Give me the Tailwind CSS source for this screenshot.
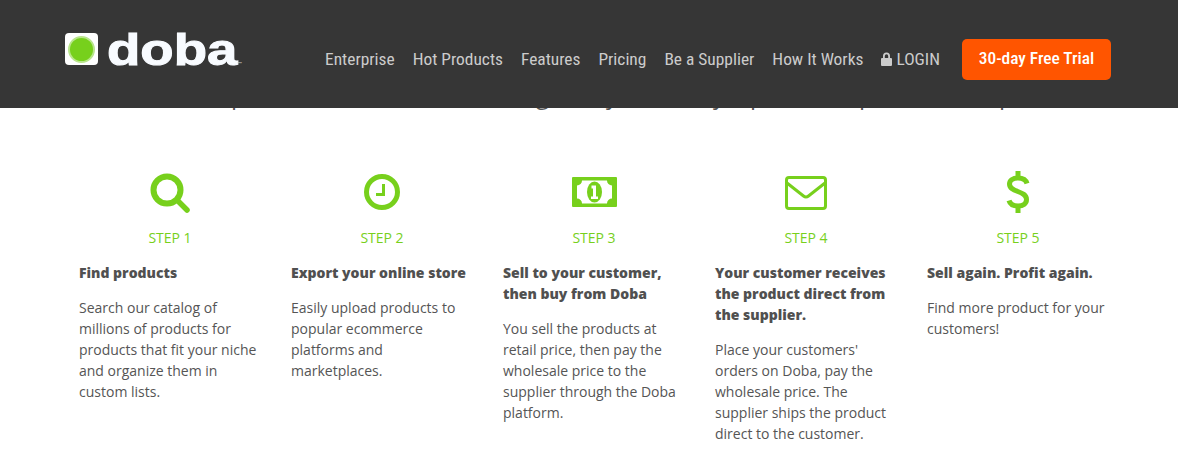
<!DOCTYPE html>
<html lang="en">
<head>
    <meta charset="UTF-8">
    <title>Doba</title>
    <script src="https://cdn.jsdelivr.net/npm/@tailwindcss/browser@4"></script>
</head>
<body class="relative bg-white h-[472px] overflow-hidden font-['Open_Sans',sans-serif]">
    <!-- Heading scrolled under the header, only the descenders show -->
    <div class="absolute inset-x-0 top-[78px] h-[34px] overflow-hidden text-[24px] leading-[34px] text-[#555555]">
        <span class="absolute left-[231px]">p</span>
        <span class="absolute left-[536px]">g</span>
        <span class="absolute left-[606px]">y</span>
        <span class="absolute left-[713px]">y</span>
        <span class="absolute left-[750px]">p</span>
        <span class="absolute left-[859px]">p</span>
        <span class="absolute left-[999px]">p</span>
    </div>

    <!-- Header -->
    <header class="relative z-10 h-[108px] bg-[#363636] flex items-start pl-[65px] pr-[67px]">
        <div class="flex items-start mt-[33px]">
            <div class="w-[33px] h-[32px] bg-white rounded-[4px] flex items-center justify-center">
                <div class="w-[27px] h-[27px] rounded-full bg-[#77d01c] border-2 border-[#b9e68c]"></div>
            </div>
            <span class="ml-[9px] -mt-[7px] text-[44px] leading-[48px] font-bold text-[#f8fbff] [-webkit-text-stroke:1px_#f8fbff] font-['Liberation_Sans',sans-serif] origin-left scale-x-[1.24] inline-block">doba<span class="text-[4px] [-webkit-text-stroke:0] text-[#cccccc]">™</span></span>
        </div>
        <nav class="ml-auto flex items-start mt-[39px] font-['Roboto',sans-serif] font-stretch-condensed text-[17.4px] leading-[40px] text-[#cccccc]">
            <a class="mr-[18px]">Enterprise</a>
            <a class="mr-[18px]">Hot Products</a>
            <a class="mr-[18px]">Features</a>
            <a class="mr-[18px]">Pricing</a>
            <a class="mr-[18px]">Be a Supplier</a>
            <a class="mr-[18px]">How It Works</a>
            <a class="mr-[22px] flex items-center">
                <svg class="w-[11px] h-[14px] mr-[4px]" viewBox="0 0 11 14"><path fill="#cccccc" d="M2 6V4a3.5 3.5 0 0 1 7 0v2h1a1 1 0 0 1 1 1v6a1 1 0 0 1-1 1H1a1 1 0 0 1-1-1V7a1 1 0 0 1 1-1zm1.800 0h3.400V4a1.700 1.700 0 0 0-3.400 0z"/></svg>
                LOGIN
            </a>
            <a class="w-[149px] h-[41px] bg-[#ff5500] rounded-[5px] text-white font-medium text-center leading-[38px]">30-day Free Trial</a>
        </nav>
    </header>

    <!-- Steps -->
    <section class="flex pl-[79px] text-[14px] leading-[21px] text-[#555555]">
        <div class="w-[212px] pr-[30px]">
            <div class="h-[46px] mt-[64px] flex justify-center">
                <svg class="w-[40px] h-[40px] mt-[1px]" viewBox="0 0 40 40" fill="none" stroke="#77d01c"><circle cx="17" cy="17" r="13.500" stroke-width="6"/><path d="M27 27l10 10" stroke-width="5.500" stroke-linecap="round"/></svg>
            </div>
            <div class="mt-[10px] text-center text-[#77d01c] text-[14px] leading-[20px]">STEP 1</div>
            <h3 class="mt-[14px] font-extrabold text-[#505050]">Find products</h3>
            <p class="mt-[14px]">Search our catalog of millions of products for products that fit your niche and organize them in custom lists.</p>
        </div>
        <div class="w-[212px] pr-[30px]">
            <div class="h-[46px] mt-[64px] flex justify-center">
                <svg class="w-[36px] h-[36px] mt-[2px]" viewBox="0 0 36 36" fill="none" stroke="#77d01c"><circle cx="18" cy="18" r="15.500" stroke-width="5"/><path d="M12 20.500h7.500V10" stroke-width="3"/></svg>
            </div>
            <div class="mt-[10px] text-center text-[#77d01c] text-[14px] leading-[20px]">STEP 2</div>
            <h3 class="mt-[14px] font-extrabold text-[#505050]">Export your online store</h3>
            <p class="mt-[14px]">Easily upload products to popular ecommerce platforms and marketplaces.</p>
        </div>
        <div class="w-[212px] pr-[30px]">
            <div class="h-[46px] mt-[64px] flex justify-center">
                <svg class="w-[45px] h-[30px] mt-[5px]" viewBox="0 0 45 30"><path fill="#77d01c" fill-rule="evenodd" d="M1 0h43a1 1 0 0 1 1 1v28a1 1 0 0 1-1 1H1a1 1 0 0 1-1-1V1a1 1 0 0 1 1-1zm9 3.500a5 5 0 0 1-5 5v13a5 5 0 0 1 5 5h25a5 5 0 0 1 5-5v-13a5 5 0 0 1-5-5z"/><ellipse cx="22.500" cy="15" rx="7.500" ry="10.500" fill="#77d01c"/><path fill="#fff" d="M19.500 8.500h4.500v11h2V22h-7v-2.500h2V11.500h-1.500z"/></svg>
            </div>
            <div class="mt-[10px] text-center text-[#77d01c] text-[14px] leading-[20px]">STEP 3</div>
            <h3 class="mt-[14px] font-extrabold text-[#505050]">Sell to your customer, then buy from Doba</h3>
            <p class="mt-[14px]">You sell the products at retail price, then pay the wholesale price to the supplier through the Doba platform.</p>
        </div>
        <div class="w-[212px] pr-[30px]">
            <div class="h-[46px] mt-[64px] flex justify-center">
                <svg class="w-[42px] h-[34px] mt-[4px]" viewBox="0 0 42 34" fill="none" stroke="#77d01c" stroke-width="3"><rect x="1.500" y="1.500" width="39" height="31" rx="2.500"/><path d="M2 7l16.500 13a4 4 0 0 0 5 0L40 7"/></svg>
            </div>
            <div class="mt-[10px] text-center text-[#77d01c] text-[14px] leading-[20px]">STEP 4</div>
            <h3 class="mt-[14px] font-extrabold text-[#505050]">Your customer receives the product direct from the supplier.</h3>
            <p class="mt-[14px]">Place your customers' orders on Doba, pay the wholesale price. The supplier ships the product direct to the customer.</p>
        </div>
        <div class="w-[212px] pr-[30px]">
            <div class="h-[46px] mt-[64px] flex justify-center">
                <svg class="w-[24px] h-[42px] -mt-[1px]" viewBox="0 0 24 42" fill="none" stroke="#77d01c" stroke-width="5"><path d="M21 12.500C20 9 16.500 7 12 7 6.500 7 3.500 9.500 3.500 13c0 9 17 6 17 15.500 0 4-3 6.500-8.500 6.500-4.500 0-8-2-9-5.500"/><path d="M12 0v8M12 34v8"/></svg>
            </div>
            <div class="mt-[10px] text-center text-[#77d01c] text-[14px] leading-[20px]">STEP 5</div>
            <h3 class="mt-[14px] font-extrabold text-[#505050]">Sell again. Profit again.</h3>
            <p class="mt-[14px]">Find more product for your customers!</p>
        </div>
    </section>
</body>
</html>
